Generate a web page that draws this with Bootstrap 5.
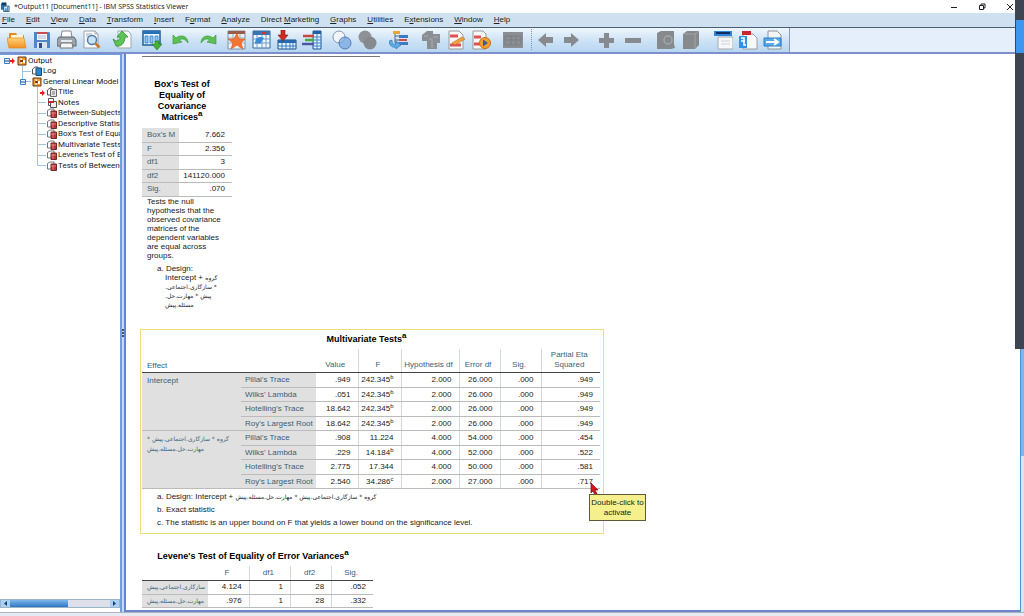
<!DOCTYPE html>
<html lang="en">
<head>
<meta charset="utf-8">
<meta name="viewport" content="width=device-width, initial-scale=1">
<title>*Output11 [Document11] - IBM SPSS Statistics Viewer</title>
<link href="https://cdn.jsdelivr.net/npm/bootstrap@5.3.0/dist/css/bootstrap.min.css" rel="stylesheet">
<style>
body{font:8px/10px "Liberation Sans","DejaVu Sans",sans-serif;color:#222;background:#fff}
a{color:inherit;text-decoration:none}
svg{display:block;flex:none}
.titlebar{height:13px;font:7px/13px "Open Sans",sans-serif;color:#111;background:#fff}
.winbtn{border:0;background:none;padding:0;width:28px;height:12px;display:flex;align-items:center;justify-content:center}
.menubar{height:14px;line-height:14px;gap:11px;padding-left:2px;background:#cfe1f0}
.toolbar{height:27px;border-top:1px solid #4a5f70;border-bottom:2px solid #7d90cd;background:#e4effb}
.toolset{padding:0 4px;background:linear-gradient(#eef6fd,#c9e0f4 60%,#b8d6f0);border-right:1px solid #8a9db0}
.tool{width:25px;height:24px;border:0;padding:0;background:none;display:flex;align-items:center;justify-content:center}
.gap-s{margin-left:5px}.gap-m{margin-left:7px}.gap-l{margin-left:10px}
.workspace{min-height:0}
.outline{width:122px;border-right:2px solid #6f9ee0;border-top:1px solid #6f9ee0;font-family:Roboto,sans-serif}
.tree li{display:flex;align-items:center;height:10px;gap:1px;white-space:nowrap}
.tree li:nth-child(odd){height:11px}
.splitter{width:4px;background:#c6d8f4;border-right:2px solid #6683cc}
.hbar{height:9px;background:#dde0ea;border:1px solid #9bb4cc}
.hthumb{width:58px;background:linear-gradient(#7db6ea,#2f76c0)}
.barbtn{width:9px;border:0;padding:0;background:#a9d0f0;display:flex;align-items:center;justify-content:center}
.output{overflow:hidden;padding-left:14px;border-bottom:2px solid #6f86cc;white-space:nowrap}
.log-line{width:238px;height:1px;margin:2px 0 22px 2px;background:#777}
.vbar{width:4px;background:#e2e0e8;border-left:1px solid #4d94d6}
.vthumb{height:72%;background:#80b4ea}
.pivot-title{font:700 9px/11px "Liberation Sans",sans-serif;color:#000;text-align:center;margin:0}
.pivot-title sup{font-size:8px;line-height:0;top:-4px;vertical-align:baseline}
.pivot{border-collapse:collapse;table-layout:fixed;line-height:10px;border-bottom:1px solid #56646c}
.pivot th{font-weight:400;color:#3a5f75;padding:0 0 0 5px;text-align:left;vertical-align:middle;border-bottom:1px solid #bbb}
.pivot td{padding:0 7px 0 0;text-align:right;border-bottom:1px solid #bbb}
.pivot tbody th{background:#e0e0e0}
.selected-pivot tbody th:not(.group-label){padding-left:4px}
.pivot thead th{text-align:center;vertical-align:bottom;border-bottom:1px solid #444;padding:0 3px 2px 0}
.pivot td+td,.pivot thead th+th.rule{border-left:1px solid #d4d8dc}
.pivot sup{font-size:6px;line-height:0;top:-3px;vertical-align:baseline}
.pivot thead th.corner{text-align:left;padding:0 0 1px 5px}
.box-test{width:90px;margin:0 2px}
.box-test .pivot-title{width:80px;margin-bottom:5px}
.rows-a tr{height:14px}.rows-a tr:nth-child(even){height:13px}
.rows-b tr{height:14px}.rows-b tr:nth-child(odd){height:15px}
.pivot .group-label{vertical-align:top;padding-top:3px}
.caption-text{line-height:9px;margin:0 0 4px 5px;white-space:pre-line}
.design{line-height:9px;margin:0 0 20px 15px}
.design div{padding-left:8px}
.fa{font-family:"DejaVu Sans",sans-serif;font-size:6px}
.selected-pivot{width:464px;border:1px solid #f0dc78;padding:4px 3px 4px 1px}
.selected-pivot .pivot-title{margin-right:9px}
.notes{line-height:13px;margin:1px 0 0 15px}
.levene{width:231px;margin:17px 2px 0}
.levene .pivot-title{width:222px}
.hint{left:448px;top:164px;width:57px;height:27px;background:#f6f08c;border:1px solid #5d5a35;line-height:10px;padding:3px 0;text-align:center;white-space:normal}
.pointer{left:449px;top:152px}
.status{height:4px;background:#e6eaf2;border-top:1px solid #aab3bd}
.side-window{right:0;top:0;width:9px;height:349px;background:#3d4452}
.side-window div{height:33px;margin:20px 0 0 1px;background:#3d96f0}
</style>
<script src="https://cdn.jsdelivr.net/npm/bootstrap@5.3.0/dist/js/bootstrap.bundle.min.js"></script>
</head>
<body class="d-flex flex-column vh-100 overflow-hidden position-relative">

<svg width="0" height="0" class="position-absolute" aria-hidden="true">
  <defs>
    <linearGradient id="fold" x2="0" y2="1"><stop stop-color="#ffd27a"/><stop offset="1" stop-color="#f09020"/></linearGradient>
    <symbol id="book" viewBox="0 0 10 10"><path d="M1 1h8v8H1z" fill="#f39a35" stroke="#6b3410"/><path d="M3 2.500h2v1.500H3zM3 6h2v1.500H3zM6 4h2v3H6z" fill="#fff"/><path d="M3 4l3 1-3 1" stroke="#7a2a08" fill="none"/></symbol>
    <symbol id="table" viewBox="0 0 10 10"><path d="M.5 2.500L3 1h4v7H.500z" fill="#fff" stroke="#777"/><path d="M4 3h5.500v6.500H4z" fill="#c22f38" stroke="#6c2a2a"/><path d="M4 5h5M6 4v5" stroke="#f0b0b0" stroke-width=".6"/></symbol>
    <symbol id="leaf" viewBox="0 0 47 11"><path d="M37.500 0v11M38 5.500h9" stroke="#9cc4e4"/></symbol>
  </defs>
</svg>

<header>
  <div class="titlebar d-flex align-items-center">
    <svg width="10" height="12" viewBox="0 0 11 12"><path d="M1 2h6v7H1z" fill="#2d6fa8"/><path d="M2 1h5v3H2z" fill="#123f68"/><path d="M4 5h6v6H4z" fill="#d8e8f4" stroke="#28597e"/><path d="M5 9h1V7h1v2h1V6h1v4H5z" fill="#2476bd"/></svg>
    <span class="ms-1 flex-grow-1">*Output11 [Document11] - IBM SPSS Statistics Viewer</span>
    <button class="winbtn" aria-label="Minimize"><svg width="8" height="8"><path d="M1 4.500h6" stroke="#222"/></svg></button>
    <button class="winbtn" aria-label="Restore"><svg width="8" height="8"><path d="M1.500 2.500h4v4h-4zM3 2V1h4v4H6" fill="none" stroke="#222"/></svg></button>
    <button class="winbtn" aria-label="Close"><svg width="8" height="8"><path d="M1 1l6 6M7 1L1 7" stroke="#222"/></svg></button>
  </div>
  <nav class="menubar d-flex">
    <a href="#"><u>F</u>ile</a><a href="#"><u>E</u>dit</a><a href="#"><u>V</u>iew</a><a href="#"><u>D</u>ata</a><a href="#"><u>T</u>ransform</a><a href="#"><u>I</u>nsert</a><a href="#">F<u>o</u>rmat</a><a href="#"><u>A</u>nalyze</a><a href="#">Direct <u>M</u>arketing</a><a href="#"><u>G</u>raphs</a><a href="#"><u>U</u>tilities</a><a href="#">E<u>x</u>tensions</a><a href="#"><u>W</u>indow</a><a href="#"><u>H</u>elp</a>
  </nav>
  <div class="toolbar d-flex">
    <div class="toolset d-flex">
      <button class="tool" aria-label="Open"><svg width="20" height="20"><path d="M2 3h7l1 2h7v13H2z" fill="#e88a1c"/><path d="M4 5h12v5H4z" fill="#fff4d8"/><path d="M0 8h17l2 10H2z" fill="url(#fold)" stroke="#e0871c" stroke-width=".7"/></svg></button>
      <button class="tool" aria-label="Save"><svg width="20" height="20"><path d="M2 2h15l1 1v15H2z" fill="#4f86c6"/><path d="M5 2h10v8H5z" fill="#f2f4f8"/><path d="M5 2h10v2H5z" fill="#d04a4a"/><path d="M6 6h8M6 8h8" stroke="#b8c0cc"/><path d="M5 12h10v6H5z" fill="#dbe2ea"/><path d="M7 13h3v5H7z" fill="#2b5088"/></svg></button>
      <button class="tool" aria-label="Print"><svg width="20" height="20"><path d="M5 1h9l1 7H4z" fill="#fff" stroke="#888"/><path d="M2 7h15l2 3v6H0v-6z" fill="#9ca3aa" stroke="#61676d"/><path d="M4 11h11" stroke="#e7eaec" stroke-width="2"/><path d="M4 13h11l1 5H3z" fill="#f4f6f8" stroke="#777"/></svg></button>
      <button class="tool" aria-label="Print preview"><svg width="20" height="20"><path d="M2 1h11l3 3v14H2z" fill="#f8fafc" stroke="#97a0aa"/><path d="M13 1v3h3M4 4h6M4 6h4" fill="none" stroke="#a5adb5"/><circle cx="10" cy="10" r="4.500" fill="#c8e3f6" stroke="#527da6" stroke-width="1.500"/><path d="M13.500 13.500l4 4" stroke="#c77a28" stroke-width="2.500"/></svg></button>
      <button class="tool gap-s" aria-label="Export"><svg width="20" height="20"><path d="M6 1h10l3 3v14H6z" fill="#f7f9fa" stroke="#a0a7ad"/><path d="M1 9l3 2c3 0 4-2 4-4H5l5-6 6 6h-3c0 6-4 10-9 9z" fill="#5cc356" stroke="#248428" stroke-width=".7"/></svg></button>
      <button class="tool gap-s" aria-label="Recall dialogs"><svg width="20" height="20"><path d="M1 1h17v14H1z" fill="#e9f4fd" stroke="#1c5fa0" stroke-width="1.500"/><path d="M1 1h17v3H1z" fill="#2771b8"/><path d="M3 6h3v7H3zM8 6h3v7H8zM13 6h3v6h-3z" fill="#8fc4ee" stroke="#2f80c8" stroke-width=".8"/><path d="M13 11h4v3h3l-5 6-5-6h3z" fill="#45b037" stroke="#1d7a20" stroke-width=".6"/></svg></button>
      <button class="tool gap-s" aria-label="Undo"><svg width="20" height="20"><path d="M1 5v9l9-2-3-2c3-2 6-1 9 3 0-7-7-9-12-5z" fill="#5cc053" stroke="#2f9034" stroke-width=".6"/></svg></button>
      <button class="tool" aria-label="Redo"><svg width="20" height="20"><path d="M19 5v9l-9-2 3-2c-3-2-6-1-9 3 0-7 7-9 12-5z" fill="#5cc053" stroke="#2f9034" stroke-width=".6"/></svg></button>
      <button class="tool gap-s" aria-label="Go to case"><svg width="20" height="20"><path d="M1 1h17v18H1z" fill="#e9f0f7" stroke="#7c92a8"/><path d="M1 1h17v3H1z" fill="#9c5a48"/><path d="M1 8h17M1 13h17M6 4v14M13 4v14" stroke="#9ab0c4"/><path d="M10 3l2 6h6l-4 4 2 6-6-4-6 4 2-6-5-4h6z" fill="#f47531" stroke="#d95518" stroke-width=".6"/></svg></button>
      <button class="tool" aria-label="Go to variable"><svg width="20" height="20"><path d="M1 1h17v17H1z" fill="#f2f7fb" stroke="#39699a"/><path d="M1 1h17v4H1z" fill="#3a72b2"/><path d="M10 2h4v2h-4z" fill="#d0372d"/><path d="M1 9h17M1 13h17M5 5v13M10 5v13M14 5v13" stroke="#6c9dca"/><path d="M3 14c0-7 5-8 9-6l-4 6c-2-1-4-1-5 0z" fill="#3b8ad3"/></svg></button>
      <button class="tool" aria-label="Insert cases"><svg width="20" height="20"><path d="M1 10h18v9H1z" fill="#eaf4fc" stroke="#174f88"/><path d="M1 10h18v3H1z" fill="#2868ad"/><path d="M1 16h18M5 13v6M9 13v6M13 13v6M16 13v6" stroke="#317cc3"/><path d="M4 0h4v5h3l-5 6-5-6h3z" fill="#cf2a22" stroke="#8c1512" stroke-width=".6"/></svg></button>
      <button class="tool" aria-label="Insert variable"><svg width="20" height="20"><path d="M11 1h8v18h-8z" fill="#e2f0fc" stroke="#1b5793"/><path d="M11 1h8v3h-8z" fill="#255fa4"/><path d="M11 7h8M11 10h8M11 13h8M11 16h8M15 4v15" stroke="#3f85c6"/><path d="M1 6h11" stroke="#c94a3c" stroke-width="2.500"/><path d="M3 10h9" stroke="#49a948" stroke-width="2.500"/><path d="M0 14h12" stroke="#4b58a8" stroke-width="2.500"/></svg></button>
      <button class="tool gap-s" aria-label="Select cases"><svg width="20" height="20"><circle cx="7" cy="7" r="6" fill="#f3f6fb" stroke="#8296b2"/><circle cx="13" cy="13" r="6" fill="#78a8e0" fill-opacity=".75" stroke="#567fb8"/></svg></button>
      <button class="tool" aria-label="Weight cases"><svg width="20" height="20"><circle cx="8" cy="7" r="6.500" fill="#8e9297"/><circle cx="13" cy="13" r="6.500" fill="#868a8f"/></svg></button>
      <button class="tool gap-m" aria-label="Value labels"><svg width="20" height="20"><path d="M4 1h7v3H4z" fill="#eda33c"/><path d="M10 5h9v3h-9z" fill="#3e79c4"/><path d="M10 9h8v2h-8z" fill="#d34a40"/><path d="M10 12h9v3h-9z" fill="#3e79c4"/><path d="M6 4v9M6 6h4M6 10h4M6 13h4" stroke="#4c6a88"/><path d="M0 11c0 5 4 7 7 6v2l5-4-5-4v3c-2 1-4 0-4-4z" fill="#5fa9e4" stroke="#2b70b6" stroke-width=".6"/></svg></button>
      <button class="tool gap-m" aria-label="Use sets"><svg width="20" height="20"><path d="M1 5l5-4h6v3h7v9h-3v6H6v-8H1z" fill="#8b8f93"/><path d="M3 6h4M8 9h3v9M12 7h5" stroke="#a9adb0" fill="none"/></svg></button>
      <button class="tool" aria-label="Edit script"><svg width="20" height="20"><path d="M3 1h10l4 4v14H3z" fill="#f7f7f8" stroke="#999"/><path d="M4 6h8M4 15h11" stroke="#e05252" stroke-width="3"/><path d="M6 13l10-6 3 2-10 6z" fill="#f0a23c" stroke="#b96822" stroke-width=".6"/></svg></button>
      <button class="tool" aria-label="Run script"><svg width="20" height="20"><path d="M2 1h10l3 3v15H2z" fill="#f7f7f8" stroke="#999"/><path d="M3 7h7M3 14h8" stroke="#e05252" stroke-width="3"/><circle cx="14" cy="13" r="5.500" fill="#f4a030" stroke="#c4701a"/><path d="M12 9.500l5 3.500-5 3.500z" fill="#3a5d90"/></svg></button>
      <button class="tool gap-m" aria-label="Designate window"><svg width="20" height="20"><path d="M0 2h20v16H0z" fill="#8b8f94"/><path d="M2 6h16v9H2zM2 10h16M8 6v9M13 6v9" stroke="#7a7e83" fill="none"/></svg></button>
      <svg class="gap-s" width="3" height="24"><path d="M1.500 1v22" stroke="#8094a8" stroke-dasharray="1 1"/></svg>
      <button class="tool" aria-label="Promote"><svg width="20" height="20"><path d="M2 10l8-7v4h7v6h-7v4z" fill="#878b90"/></svg></button>
      <button class="tool" aria-label="Demote"><svg width="20" height="20"><path d="M18 10l-8-7v4H3v6h7v4z" fill="#878b90"/></svg></button>
      <button class="tool gap-l" aria-label="Expand"><svg width="20" height="20"><path d="M8 3h5v5h5v5h-5v5H8v-5H3V8h5z" fill="#878b90"/></svg></button>
      <button class="tool" aria-label="Collapse"><svg width="20" height="20"><path d="M4 8h16v5H4z" fill="#878b90"/></svg></button>
      <button class="tool gap-l" aria-label="Show"><svg width="20" height="20"><path d="M1 3l4-2h13v13l1 4-4 1H1z" fill="#868a8d"/><circle cx="12" cy="10" r="4" fill="none" stroke="#a3a7aa" stroke-width="1.500"/></svg></button>
      <button class="tool" aria-label="Hide"><svg width="20" height="20"><path d="M2 4l4-3h12v14l-4 4H2z" fill="#868a8d"/><path d="M3 4h11v14M14 4l4-3" fill="none" stroke="#a0a4a7"/></svg></button>
      <button class="tool gap-m" aria-label="Insert heading"><svg width="20" height="20"><path d="M5 7h15v12H5z" fill="#f7f8fa" stroke="#a7abb0"/><path d="M8 11h9M8 14h9" stroke="#ccd0d4"/><path d="M1 1h18v5H1z" fill="#2d86da"/><path d="M3 3h14" stroke="#102c60" stroke-width="2"/></svg></button>
      <button class="tool" aria-label="Insert title"><svg width="20" height="20"><path d="M5 4h10l4 4v11H5z" fill="#f7f8fa" stroke="#9a9ea4"/><path d="M4 1h9v4H4z" fill="#cd2430"/><path d="M1 6h8v12H1z" fill="#3291e4"/><path d="M3 8h3v7h2M3 11h4" stroke="#fff" fill="none" stroke-width="1.500"/></svg></button>
      <button class="tool" aria-label="Insert text"><svg width="20" height="20"><path d="M5 1h9l4 4v14H5z" fill="#f2f4f6" stroke="#8e9398"/><path d="M1 8h17v8H1z" fill="#58a9ea" stroke="#2a7cc4"/><path d="M3 12h11M11 9l4 3-4 3" stroke="#fff" stroke-width="2" fill="none"/></svg></button>
    </div>
  </div>
</header>

<main class="workspace d-flex flex-grow-1">
  <aside class="outline d-flex flex-column overflow-hidden flex-shrink-0">
    <ul class="tree list-unstyled mb-0 flex-grow-1">
      <li><svg width="16" height="11"><path d="M4.500 3.500h5v5h-5z" fill="#e8f2fc" stroke="#3a7fc4"/><path d="M5 6h4" stroke="#1b4e8c"/><path d="M10 5h2V3l3 3-3 3V7h-2z" fill="#e02020"/></svg><svg width="10" height="10"><use href="#book"/></svg>Output</li>
      <li><svg width="31" height="11"><path d="M22.500 0v11M23 5.500h8" stroke="#9cc4e4"/></svg><svg width="10" height="10"><path d="M.5 3L3 1h3v7H.500z" fill="#fff" stroke="#555"/><path d="M4 2h5.500v7.500H4z" fill="#2f88c8" stroke="#174c78"/></svg>Log</li>
      <li><svg width="31" height="11"><path d="M22.500 0v3M26 5.500h5" stroke="#9cc4e4"/><path d="M20.500 3.500h5v5h-5z" fill="#e8f2fc" stroke="#3a7fc4"/><path d="M21 6h4" stroke="#1b4e8c"/></svg><svg width="10" height="10"><use href="#book"/></svg>General Linear Model</li>
      <li><svg width="46" height="11"><path d="M37.500 0v11" stroke="#9cc4e4"/><path d="M40 5h2V3l3 3-3 3V7h-2z" fill="#e02020"/></svg><svg width="10" height="10"><path d="M.500 3L3 1h2v7H.500z" fill="#fff" stroke="#555"/><path d="M3.500 2.500h6v7h-6z" fill="#e8e8e8" stroke="#666"/><path d="M5 5h3M5 7h3" stroke="#777"/></svg>Title</li>
      <li><svg width="46" height="11"><use href="#leaf" width="47" height="11"/></svg><svg width="10" height="10"><path d="M1.500.500h5v7h-5z" fill="#fff" stroke="#555"/><path d="M3.500 3.500h6v6h-6z" fill="#eee" stroke="#555"/><path d="M1 4h6" stroke="#bb2530" stroke-width="2"/></svg>Notes</li>
      <li><svg width="46" height="11"><use href="#leaf" width="47" height="11"/></svg><svg width="10" height="10"><use href="#table"/></svg>Between-Subjects</li>
      <li><svg width="46" height="11"><use href="#leaf" width="47" height="11"/></svg><svg width="10" height="10"><use href="#table"/></svg>Descriptive Statist</li>
      <li><svg width="46" height="11"><use href="#leaf" width="47" height="11"/></svg><svg width="10" height="10"><use href="#table"/></svg>Box's Test of Equa</li>
      <li><svg width="46" height="11"><use href="#leaf" width="47" height="11"/></svg><svg width="10" height="10"><use href="#table"/></svg>Multivariate Tests</li>
      <li><svg width="46" height="11"><use href="#leaf" width="47" height="11"/></svg><svg width="10" height="10"><use href="#table"/></svg>Levene's Test of E</li>
      <li><svg width="46" height="11"><path d="M37.500 0v5.500H47" fill="none" stroke="#9cc4e4"/></svg><svg width="10" height="10"><use href="#table"/></svg>Tests of Between-</li>
    </ul>
    <div class="hbar d-flex mb-1 flex-shrink-0">
      <button class="barbtn" aria-label="Scroll left"><svg width="5" height="7"><path d="M4 1v5L1 3.500z" fill="#123f78"/></svg></button>
      <div class="hthumb"></div>
      <button class="barbtn ms-auto" aria-label="Scroll right"><svg width="5" height="7"><path d="M1 1v5l3-2.500z" fill="#123f78"/></svg></button>
    </div>
  </aside>
  <div class="splitter flex-shrink-0 d-flex align-items-center"><svg width="3" height="8"><path d="M1 0v2M1 3v2M1 6v2" stroke="#456" stroke-width="2"/></svg></div>

  <section class="output flex-grow-1">
    <div class="log-line"></div>

    <div class="box-test">
      <h2 class="pivot-title">Box's Test of<br>Equality of<br>Covariance<br>Matrices<sup>a</sup></h2>
      <table class="pivot w-100 rows-a">
        <colgroup><col style="width:37px"><col></colgroup>
        <tbody>
          <tr><th scope="row">Box's M</th><td>7.662</td></tr>
          <tr><th scope="row">F</th><td>2.356</td></tr>
          <tr><th scope="row">df1</th><td>3</td></tr>
          <tr><th scope="row">df2</th><td>141120.000</td></tr>
          <tr><th scope="row">Sig.</th><td>.070</td></tr>
        </tbody>
      </table>
      <p class="caption-text">Tests the null
hypothesis that the
observed covariance
matrices of the
dependent variables
are equal across
groups.</p>
      <div class="design">a. Design:
        <div>Intercept + <span class="fa">گروه</span></div>
        <div><bdi dir="rtl" class="fa">* سازگاری.اجتماعی.</bdi></div>
        <div><bdi dir="rtl" class="fa">پیش * مهارت.حل.</bdi></div>
        <div><bdi dir="rtl" class="fa">مسئله.پیش</bdi></div>
      </div>
    </div>

    <div class="selected-pivot position-relative">
      <h2 class="pivot-title">Multivariate Tests<sup>a</sup></h2>
      <table class="pivot w-100 mt-1">
        <colgroup><col style="width:99px"><col style="width:75px"><col style="width:42px"><col style="width:43px"><col style="width:58px"><col style="width:41px"><col style="width:41px"><col></colgroup>
        <thead>
          <tr style="height:24px"><th class="corner">Effect</th><th></th><th>Value</th><th class="rule">F</th><th class="rule">Hypothesis df</th><th class="rule">Error df</th><th class="rule">Sig.</th><th class="rule">Partial Eta<br>Squared</th></tr>
        </thead>
        <tbody class="rows-b">
          <tr><th rowspan="4" class="group-label">Intercept</th><th>Pillai's Trace</th><td>.949</td><td>242.345<sup>b</sup></td><td>2.000</td><td>26.000</td><td>.000</td><td>.949</td></tr>
          <tr><th>Wilks' Lambda</th><td>.051</td><td>242.345<sup>b</sup></td><td>2.000</td><td>26.000</td><td>.000</td><td>.949</td></tr>
          <tr><th>Hotelling's Trace</th><td>18.642</td><td>242.345<sup>b</sup></td><td>2.000</td><td>26.000</td><td>.000</td><td>.949</td></tr>
          <tr><th>Roy's Largest Root</th><td>18.642</td><td>242.345<sup>b</sup></td><td>2.000</td><td>26.000</td><td>.000</td><td>.949</td></tr>
          <tr><th rowspan="4" class="group-label"><bdi dir="rtl" class="fa">گروه * سازگاری.اجتماعی.پیش *</bdi><br><bdi dir="rtl" class="fa">مهارت.حل.مسئله.پیش</bdi></th><th>Pillai's Trace</th><td>.908</td><td>11.224</td><td>4.000</td><td>54.000</td><td>.000</td><td>.454</td></tr>
          <tr><th>Wilks' Lambda</th><td>.229</td><td>14.184<sup>b</sup></td><td>4.000</td><td>52.000</td><td>.000</td><td>.522</td></tr>
          <tr><th>Hotelling's Trace</th><td>2.775</td><td>17.344</td><td>4.000</td><td>50.000</td><td>.000</td><td>.581</td></tr>
          <tr><th>Roy's Largest Root</th><td>2.540</td><td>34.286<sup>c</sup></td><td>2.000</td><td>27.000</td><td>.000</td><td>.717</td></tr>
        </tbody>
      </table>
      <div class="notes">
        <div>a. Design: Intercept + <bdi dir="rtl" class="fa">گروه * سازگاری.اجتماعی.پیش * مهارت.حل.مسئله.پیش</bdi></div>
        <div>b. Exact statistic</div>
        <div>c. The statistic is an upper bound on F that yields a lower bound on the significance level.</div>
      </div>
      <svg class="pointer position-absolute" width="10" height="14"><path d="M1 1v10l2-2 2 4 2-1-2-4h3z" fill="#d8141c" stroke="#6d0c10" stroke-width=".7"/></svg>
      <div class="hint position-absolute" role="tooltip">Double-click to activate</div>
    </div>

    <div class="levene">
      <h2 class="pivot-title">Levene's Test of Equality of Error Variances<sup>a</sup></h2>
      <table class="pivot w-100 mt-1">
        <colgroup><col style="width:66px"><col><col><col><col></colgroup>
        <thead><tr style="height:14px"><th></th><th>F</th><th class="rule">df1</th><th class="rule">df2</th><th class="rule">Sig.</th></tr></thead>
        <tbody class="rows-a">
          <tr><th><bdi dir="rtl" class="fa">سازگاری.اجتماعی.پیش</bdi></th><td>4.124</td><td>1</td><td>28</td><td>.052</td></tr>
          <tr><th><bdi dir="rtl" class="fa">مهارت.حل.مسئله.پیش</bdi></th><td>.976</td><td>1</td><td>28</td><td>.332</td></tr>
        </tbody>
      </table>
      <p class="mb-0 ms-1">Tests the null hypothesis that the error variance of the</p>
    </div>
  </section>
  <div class="vbar flex-shrink-0"><div class="vthumb"></div></div>
</main>
<footer class="status flex-shrink-0"></footer>
<div class="side-window position-absolute"><div></div></div>
</body>
</html>
